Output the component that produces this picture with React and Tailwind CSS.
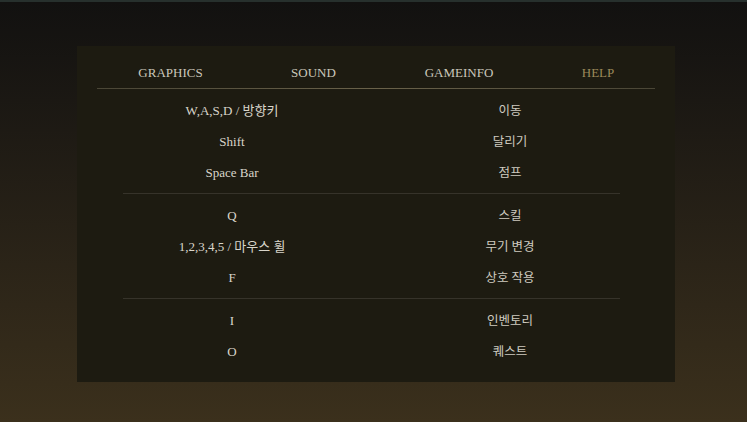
import React from 'react';

const tabs = [
  ['GRAPHICS', 'w-[143px]'],
  ['SOUND', 'w-[143px]'],
  ['GAMEINFO', 'w-[148px]'],
  ['HELP', 'w-[130px]'],
];

const groups = [
  [
    ['W,A,S,D / 방향키', '이동'],
    ['Shift', '달리기'],
    ['Space Bar', '점프'],
  ],
  [
    ['Q', '스킬'],
    ['1,2,3,4,5 / 마우스 휠', '무기 변경'],
    ['F', '상호 작용'],
  ],
  [
    ['I', '인벤토리'],
    ['O', '퀘스트'],
  ],
];

export default function App() {
  return (
    <div
      className="w-[747px] h-[422px] overflow-hidden border-t-2 border-[#27302d] bg-gradient-to-b from-[#121110] to-[#3b301c] pl-[77px] pt-[44px]"
      style={{ fontFamily: '"Liberation Serif", "Noto Sans CJK KR", serif' }}
    >
      <div className="w-[598px] bg-[#1d1b11] pt-[17px] pb-[15px]">
        <div className="ml-[22px] flex h-[20px] text-[13px] leading-[20px]">
          {tabs.map(([t, w]) => (
            <div
              key={t}
              className={`${w} text-center ${t === 'HELP' ? 'text-[#9c8a5a]' : 'text-[#cbc7bb]'}`}
            >
              {t}
            </div>
          ))}
        </div>
        <div className="mx-[20px] mt-[5px] h-px bg-gradient-to-r from-[#4a4636] via-[#6a624a] to-[#4a4636]" />

        {groups.map((rows, gi) => (
          <div key={gi}>
            {gi > 0 && <div className="ml-[46px] mr-[55px] mt-[5px] h-px bg-[#36332a]" />}
            <div className="mt-[6px] flex flex-col">
              {rows.map(([key, action]) => (
                <div key={key} className="h-[31px] flex items-center text-[13px] text-[#d9d5ca]">
                  <div className="ml-[46px] w-[218px] text-center">{key}</div>
                  <div className="ml-[59px] w-[220px] pt-[2px] text-center text-[12.5px] text-[#cfcbc0]">{action}</div>
                </div>
              ))}
            </div>
          </div>
        ))}
      </div>
    </div>
  );
}
